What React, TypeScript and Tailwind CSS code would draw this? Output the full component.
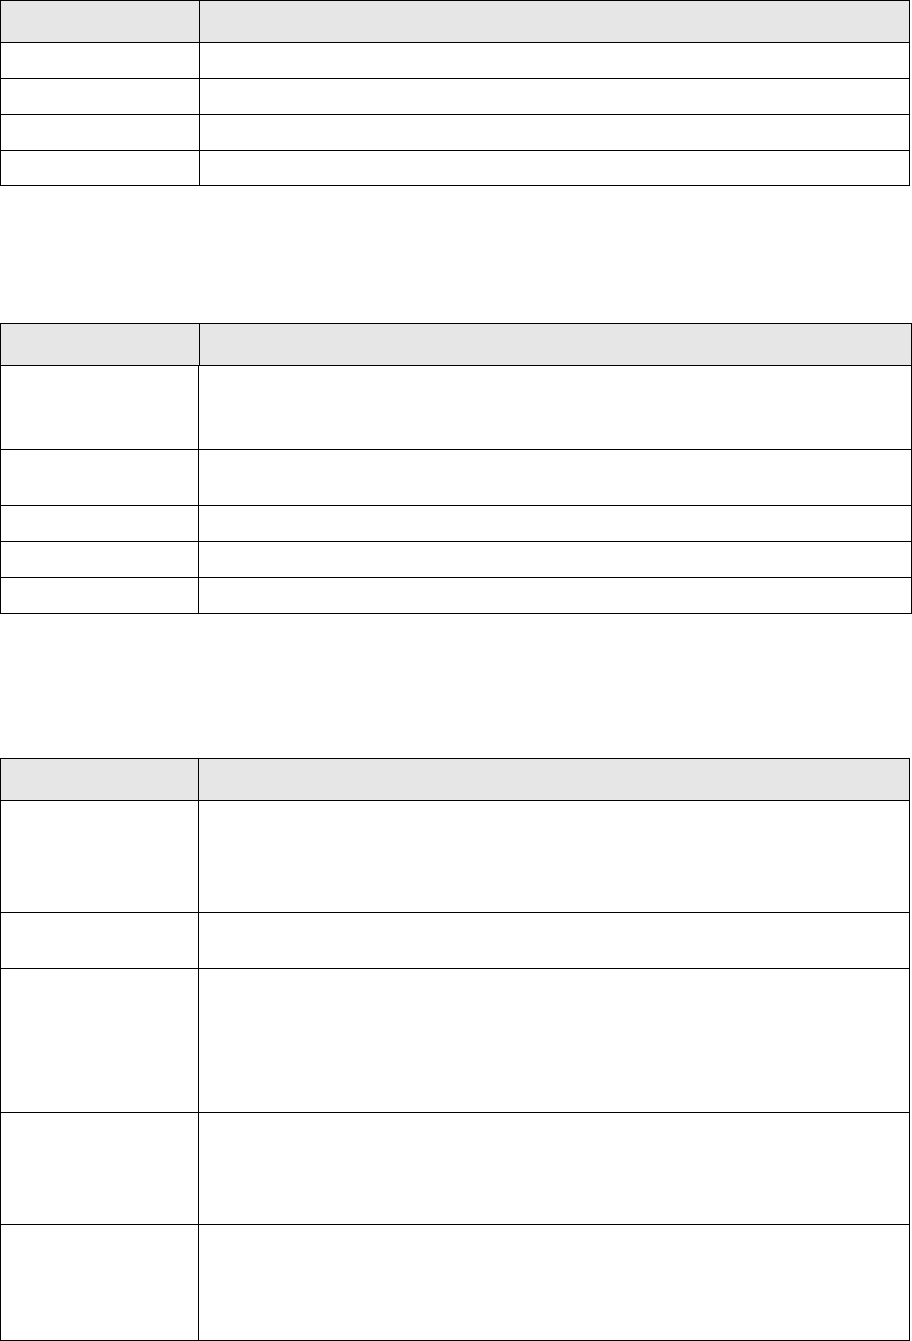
import React from 'react';

type GridTable = {
  width: string;
  gap: string;
  headCol: string;
  bodyCol: string;
  rows: string[];
};

// Three empty bordered tables, each with a grey header row
const tables: GridTable[] = [
  {
    width: 'w-[910px]',
    gap: 'mt-0',
    headCol: 'w-[199px]',
    bodyCol: 'w-[199px]',
    rows: ['h-[36px]', 'h-[36px]', 'h-[36px]', 'h-[35px]'],
  },
  {
    width: 'w-[912px]',
    gap: 'mt-[137px]',
    headCol: 'w-[199px]',
    bodyCol: 'w-[198px]',
    rows: ['h-[84px]', 'h-[56px]', 'h-[36px]', 'h-[36px]', 'h-[36px]'],
  },
  {
    width: 'w-[910px]',
    gap: 'mt-[144px]',
    headCol: 'w-[198px]',
    bodyCol: 'w-[198px]',
    rows: ['h-[112px]', 'h-[56px]', 'h-[144px]', 'h-[112px]', 'h-[116px]'],
  },
];

const EmptyTable: React.FC<{ table: GridTable }> = ({ table }) => {
  return (
    <div className={`${table.width} ${table.gap} border-t border-l border-r border-black`}>
      <div className="flex h-[42px] border-b border-black bg-[#e6e6e6]">
        <div className={`${table.headCol} shrink-0 border-r border-black`} />
        <div className="flex-1" />
      </div>
      {table.rows.map((h, i) => (
        <div key={i} className={`flex ${h} border-b border-black`}>
          <div className={`${table.bodyCol} shrink-0 border-r border-black`} />
          <div className="flex-1" />
        </div>
      ))}
    </div>
  );
};

const App: React.FC = () => {
  return (
    <div className="w-[912px] h-[1341px] bg-white flex flex-col font-['Liberation_Sans',sans-serif]">
      {tables.map((t, i) => (
        <EmptyTable key={i} table={t} />
      ))}
    </div>
  );
};

export default App;
